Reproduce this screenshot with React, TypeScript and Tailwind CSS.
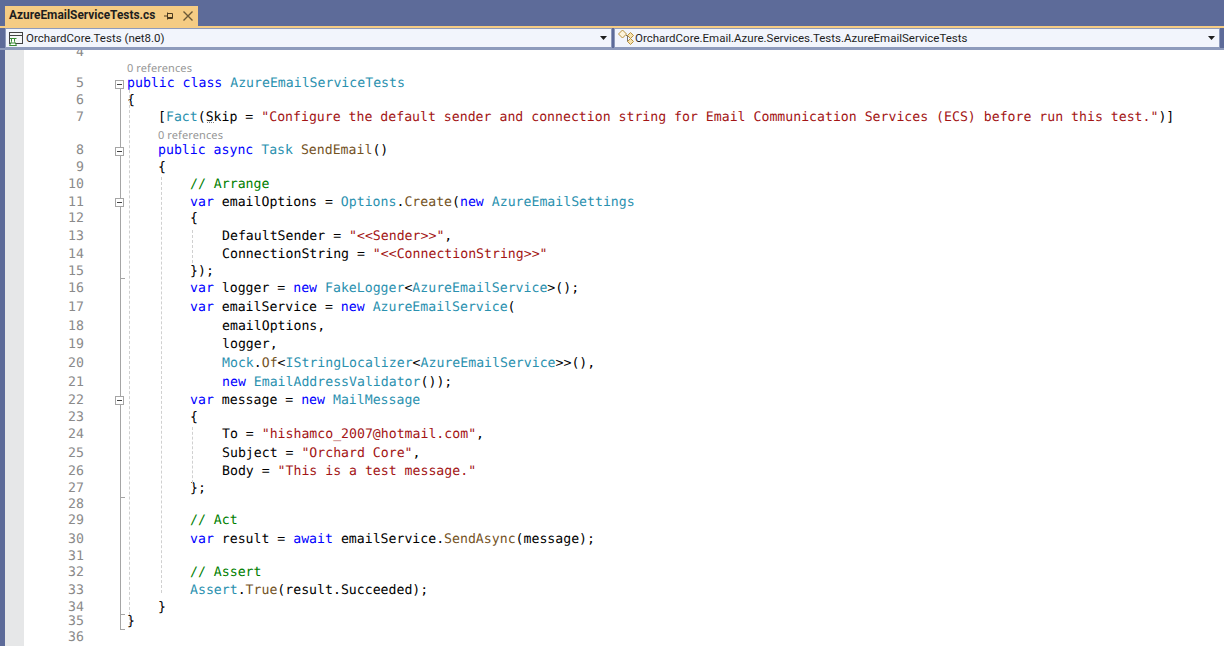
import React from 'react';

type Tok = [string, string];

const K = 'text-[#0000ff]';
const T = 'text-[#2b91af]';
const S = 'text-[#a31515]';
const C = 'text-[#008000]';
const M = 'text-[#74531f]';
const P = 'text-[#000000]';

interface Row {
  num?: string;
  h: string;
  indent?: string;
  toks?: Tok[];
  lens?: boolean;
  fold?: boolean;
}

const rows: Row[] = [
  { num: '4', h: 'h-[12px]' },
  { h: 'h-[17px]', lens: true, indent: 'pl-0', toks: [['0 references', '']] },
  { num: '5', h: 'h-[16px]', fold: true, indent: 'pl-0', toks: [['public class ', K], ['AzureEmailServiceTests', T]] },
  { num: '6', h: 'h-[17px]', indent: 'pl-0', toks: [['{', P]] },
  { num: '7', h: 'h-[17px]', indent: 'pl-[31px]', toks: [['[', P], ['Fact', T], ['(Skip = ', P], ['"Configure the default sender and connection string for Email Communication Services (ECS) before run this test."', S], [')]', P]] },
  { h: 'h-[17px]', lens: true, indent: 'pl-[31px]', toks: [['0 references', '']] },
  { num: '8', h: 'h-[16px]', fold: true, indent: 'pl-[31px]', toks: [['public async ', K], ['Task ', T], ['SendEmail', M], ['()', P]] },
  { num: '9', h: 'h-[17px]', indent: 'pl-[31px]', toks: [['{', P]] },
  { num: '10', h: 'h-[18px]', indent: 'pl-[63px]', toks: [['// Arrange', C]] },
  { num: '11', h: 'h-[17px]', fold: true, indent: 'pl-[63px]', toks: [['var ', K], ['emailOptions = ', P], ['Options', T], ['.', P], ['Create', M], ['(', P], ['new ', K], ['AzureEmailSettings', T]] },
  { num: '12', h: 'h-[16px]', indent: 'pl-[63px]', toks: [['{', P]] },
  { num: '13', h: 'h-[19px]', indent: 'pl-[95px]', toks: [['DefaultSender = ', P], ['"<<Sender>>"', S], [',', P]] },
  { num: '14', h: 'h-[17px]', indent: 'pl-[95px]', toks: [['ConnectionString = ', P], ['"<<ConnectionString>>"', S]] },
  { num: '15', h: 'h-[17px]', indent: 'pl-[63px]', toks: [['});', P]] },
  { num: '16', h: 'h-[18px]', indent: 'pl-[63px]', toks: [['var ', K], ['logger = ', P], ['new ', K], ['FakeLogger', T], ['<', P], ['AzureEmailService', T], ['>();', P]] },
  { num: '17', h: 'h-[20px]', indent: 'pl-[63px]', toks: [['var ', K], ['emailService = ', P], ['new ', K], ['AzureEmailService', T], ['(', P]] },
  { num: '18', h: 'h-[17px]', indent: 'pl-[95px]', toks: [['emailOptions,', P]] },
  { num: '19', h: 'h-[19px]', indent: 'pl-[95px]', toks: [['logger,', P]] },
  { num: '20', h: 'h-[19px]', indent: 'pl-[95px]', toks: [['Mock', T], ['.', P], ['Of', M], ['<', P], ['IStringLocalizer', T], ['<', P], ['AzureEmailService', T], ['>>(),', P]] },
  { num: '21', h: 'h-[19px]', indent: 'pl-[95px]', toks: [['new ', K], ['EmailAddressValidator', T], ['());', P]] },
  { num: '22', h: 'h-[17px]', fold: true, indent: 'pl-[63px]', toks: [['var ', K], ['message = ', P], ['new ', K], ['MailMessage', T]] },
  { num: '23', h: 'h-[17px]', indent: 'pl-[63px]', toks: [['{', P]] },
  { num: '24', h: 'h-[18px]', indent: 'pl-[95px]', toks: [['To = ', P], ['"hishamco_2007@hotmail.com"', S], [',', P]] },
  { num: '25', h: 'h-[19px]', indent: 'pl-[95px]', toks: [['Subject = ', P], ['"Orchard Core"', S], [',', P]] },
  { num: '26', h: 'h-[18px]', indent: 'pl-[95px]', toks: [['Body = ', P], ['"This is a test message."', S]] },
  { num: '27', h: 'h-[16px]', indent: 'pl-[63px]', toks: [['};', P]] },
  { num: '28', h: 'h-[15px]' },
  { num: '29', h: 'h-[18px]', indent: 'pl-[63px]', toks: [['// Act', C]] },
  { num: '30', h: 'h-[19px]', indent: 'pl-[63px]', toks: [['var ', K], ['result = ', P], ['await ', K], ['emailService', P], ['.', P], ['SendAsync', M], ['(message);', P]] },
  { num: '31', h: 'h-[15px]' },
  { num: '32', h: 'h-[18px]', indent: 'pl-[63px]', toks: [['// Assert', C]] },
  { num: '33', h: 'h-[18px]', indent: 'pl-[63px]', toks: [['Assert', T], ['.', P], ['True', M], ['(result.Succeeded);', P]] },
  { num: '34', h: 'h-[15px]', indent: 'pl-[31px]', toks: [['}', P]] },
  { num: '35', h: 'h-[14px]', indent: 'pl-0', toks: [['}', P]] },
  { num: '36', h: 'h-[17px]' },
];

function ProjectIcon() {
  return (
    <svg width="17" height="16" viewBox="0 0 17 16" className="shrink-0">
      <rect x="0.5" y="2.5" width="13" height="11" fill="#f5f6f7" stroke="#424242" />
      <path d="M0.5 5.5h13" stroke="#424242" />
      <path d="M1 8.5h6.5M2.5 8.5v3L0.5 15.5h7l-2-4v-3" fill="#ffffff" stroke="#388a34" />
      <path d="M2 13h4" stroke="#388a34" />
    </svg>
  );
}

function ClassIcon() {
  return (
    <svg width="17" height="18" viewBox="0 0 17 18" className="shrink-0">
      <path d="M8 6.5h3M9.5 6.5v6h2" fill="none" stroke="#77726a" />
      <path d="M0.5 5 4.5 1 8.5 5l-4 4z" fill="#fdf4dc" stroke="#b8923f" />
      <path d="M12.5 3.5l3 3-3 3-3-3z" fill="#f6e1ad" stroke="#b8923f" />
      <path d="M12.5 9.5l3 3-3 3-3-3z" fill="#f6e1ad" stroke="#b8923f" />
    </svg>
  );
}

function Caret() {
  return (
    <svg width="7" height="4" viewBox="0 0 7 4" className="shrink-0">
      <path d="M0 0h7L3.5 4z" fill="#1e1e1e" />
    </svg>
  );
}

function PinIcon() {
  return (
    <svg width="10" height="10" viewBox="0 0 10 10">
      <path d="M0 5h3.5M3.5 1.5v7M3.5 2.5h5v5h-5M3.5 6.5h5" fill="none" stroke="#4a3a20" />
    </svg>
  );
}

function CloseIcon() {
  return (
    <svg width="10" height="10" viewBox="0 0 10 10">
      <path d="M0.5 0.5l9 9M9.5 0.5l-9 9" stroke="#6b5836" strokeWidth="1.4" />
    </svg>
  );
}

function FoldBox() {
  return (
    <div className="flex h-[9px] w-[9px] items-center justify-center border border-[#a5a5a5] bg-white">
      <div className="h-px w-[5px] bg-[#444444]" />
    </div>
  );
}

function CodeRow({ row }: { row: Row }) {
  return (
    <div className={`${row.h} flex items-center`}>
      <div className="w-[60px] shrink-0 text-right text-[#8a8a8a]">{row.num}</div>
      <div className="relative z-10 w-[43px] shrink-0 pl-[31px]">{row.fold && <FoldBox />}</div>
      {row.toks && (
        <div
          className={
            row.lens
              ? `${row.indent} pt-[3px] font-['Noto_Sans'] text-[11px] tracking-[0.01em] text-[#969696]`
              : `${row.indent} whitespace-pre`
          }
        >
          {row.toks.map(([text, color], i) => (
            <span key={i} className={color}>
              {text}
            </span>
          ))}
        </div>
      )}
    </div>
  );
}

function FoldLines() {
  return (
    <>
      <div className="absolute left-[96px] top-[30px] h-[549px] w-px bg-[#a5a5a5]" />
      <div className="absolute left-[96px] top-[228px] h-px w-[5px] bg-[#a5a5a5]" />
      <div className="absolute left-[96px] top-[447px] h-px w-[5px] bg-[#a5a5a5]" />
      <div className="absolute left-[96px] top-[564px] h-px w-[5px] bg-[#a5a5a5]" />
      <div className="absolute left-[96px] top-[579px] h-px w-[5px] bg-[#a5a5a5]" />
      <div className="absolute left-[105px] top-[40px] h-[535px] w-px border-l border-dashed border-[#d0d0d0]" />
      <div className="absolute left-[137px] top-[127px] h-[416px] w-px border-l border-dashed border-[#d0d0d0]" />
      <div className="absolute left-[168px] top-[180px] h-[33px] w-px border-l border-dashed border-[#d0d0d0]" />
      <div className="absolute left-[168px] top-[377px] h-[56px] w-px border-l border-dashed border-[#d0d0d0]" />
      <div className="absolute left-[183px] top-[72px] h-px w-[7px] border-b border-dotted border-[#808080]" />
    </>
  );
}

export default function App() {
  return (
    <div className="flex h-[646px] w-[1224px] flex-col overflow-hidden bg-[#5d6b99]">
      <div className="flex h-[26px] shrink-0 items-end pl-[5px]">
        <div className="flex h-[20px] w-[193px] items-center bg-[#f5cc84] pl-[4px] text-[#1e1e1e]">
          <span className="w-[152px] font-['Roboto'] text-[11.9px] font-bold leading-none">AzureEmailServiceTests.cs</span>
          <span className="ml-[3px]"><PinIcon /></span>
          <span className="ml-[9px]"><CloseIcon /></span>
        </div>
      </div>
      <div className="h-[2px] shrink-0 bg-[#f5cc84]" />
      <div className="flex h-[20px] shrink-0 items-stretch gap-[2px] pl-[5px] pr-[4px] font-['Roboto'] text-[11.5px] text-[#1e1e1e]">
        <div className="flex w-[607px] items-center border border-[#8e9bbc] bg-[#f2f5fc] pl-[3px] pr-[4px]">
          <ProjectIcon />
          <span className="flex-1 pt-[1px]">OrchardCore.Tests (net8.0)</span>
          <Caret />
        </div>
        <div className="flex flex-1 items-center border border-[#8e9bbc] bg-[#f2f5fc] pl-[3px] pr-[4px]">
          <ClassIcon />
          <span className="flex-1 pt-[1px]">OrchardCore.Email.Azure.Services.Tests.AzureEmailServiceTests</span>
          <Caret />
        </div>
      </div>
      <div className="h-[2px] shrink-0 bg-[#8e9bbc]" />
      <div className="flex min-h-0 flex-1 pl-[5px]">
        <div className="w-[19px] shrink-0 bg-[#e6e7e8]" />
        <div className="relative flex-1 overflow-hidden bg-white font-['DejaVu_Sans_Mono'] text-[13.2px] text-black [text-rendering:geometricPrecision]">
          <FoldLines />
          <div className="-mt-[3px] flex flex-col">
            {rows.map((row, i) => (
              <CodeRow key={i} row={row} />
            ))}
          </div>
        </div>
      </div>
    </div>
  );
}
